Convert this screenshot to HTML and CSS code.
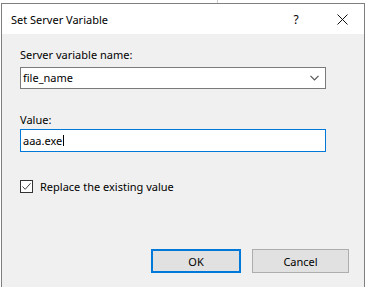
FILE: index.html
```html
<!DOCTYPE html>
<html lang="en">

<head>
  <meta charset="UTF-8" />
  <meta name="viewport" content="width=device-width, initial-scale=1.0" />
  <title>Set Server Variable</title>
  <link rel="stylesheet" href="styles.css">
</head>

<body>
  <div class="backdrop">
    <span class="backdrop-line"></span>
  </div>
  <div class="dialog">
    <div class="titlebar">
      <span class="title">Set Server Variable</span>
      <span class="title-help">?</span>
      <span class="title-close">
        <svg width="11" height="11" viewBox="0 0 11 11">
          <path d="M0.5 0.5 L10.5 10.5 M10.5 0.5 L0.5 10.5" stroke="#111" stroke-width="1" fill="none" />
        </svg>
      </span>
    </div>
    <div class="dialog-body">
      <label class="field-label label-name">Server variable name:</label>
      <div class="combo">
        <span class="field-text">file_name</span>
        <svg class="combo-arrow" width="9" height="6" viewBox="0 0 9 6">
          <path d="M0.5 0.8 L4.5 4.8 L8.5 0.8" stroke="#555" stroke-width="1.2" fill="none" />
        </svg>
      </div>
      <label class="field-label label-value">Value:</label>
      <div class="textbox focused">
        <span class="field-text">aaa.exe</span><span class="caret"></span>
      </div>
      <div class="check-row">
        <span class="checkbox">
          <svg width="11" height="11" viewBox="0 0 11 11">
            <path d="M1.5 5.5 L4.2 8.3 L9.6 2.2" stroke="#444" stroke-width="1" fill="none" />
          </svg>
        </span>
        <span class="check-label">Replace the existing value</span>
      </div>
      <div class="buttons">
        <button class="btn btn-default">OK</button>
        <button class="btn btn-cancel">Cancel</button>
      </div>
    </div>
  </div>
</body>

</html>
```

FILE: styles.css
```css
:root {
  --color-page: #fff;
  --color-face: #f0f0f0;
  --color-frame: #7f7f7f;
  --color-input-border: #7a7a7a;
  --color-accent: #0078d7;
  --color-btn: #e1e1e1;
  --color-btn-border: #adadad;
  --color-text: #000;
  --font-ui: "Noto Sans", "Open Sans", sans-serif;
}

* {
  box-sizing: border-box;
  margin: 0;
  padding: 0;
}

html,
body {
  height: 100%;
  overflow: hidden;
}

body {
  background-color: var(--color-page);
  font-family: var(--font-ui);
  font-size: 11px;
  color: var(--color-text);
  display: flex;
  flex-direction: column;
}

.backdrop {
  height: 3px;
  padding-left: 217px;
}

.backdrop-line {
  display: block;
  width: 1px;
  height: 3px;
  background-color: #ccc;
}

.dialog {
  flex: 1;
  width: 364px;
  margin-left: 1px;
  border: 1px solid var(--color-frame);
  border-bottom: none;
  display: flex;
  flex-direction: column;
}

.titlebar {
  height: 30px;
  background-color: #fff;
  display: flex;
  align-items: center;
  padding-left: 9px;
}

.title {
  flex: 1;
  font-size: 11px;
  line-height: 16px;
  padding-top: 1px;
}

.title-help {
  width: 20px;
  font-size: 12px;
  text-align: center;
  margin-right: 31px;
  padding-top: 1px;
}

.title-close {
  width: 11px;
  height: 11px;
  margin-right: 16px;
  display: flex;
}

.dialog-body {
  flex: 1;
  background-color: var(--color-face);
  padding: 13px 0 0 18px;
  display: flex;
  flex-direction: column;
}

.field-label {
  display: block;
  line-height: 16px;
}

.label-name {
  margin-bottom: 4px;
}

.label-value {
  margin-top: 23px;
  margin-bottom: 1px;
}

.combo,
.textbox {
  width: 306px;
  height: 22px;
  border: 1px solid var(--color-input-border);
  background-color: #fff;
  display: flex;
  align-items: center;
  padding-left: 2px;
}

.textbox {
  height: 23px;
}

.textbox.focused {
  border-color: var(--color-accent);
}

.field-text {
  line-height: 16px;
}

.combo .field-text {
  flex: 1;
}

.combo-arrow {
  margin-right: 6px;
}

.caret {
  display: inline-block;
  width: 1px;
  height: 11px;
  background-color: #000;
  margin-left: 1px;
}

.check-row {
  display: flex;
  align-items: center;
  margin-top: 28px;
  height: 13px;
}

.checkbox {
  width: 13px;
  height: 13px;
  border: 1px solid #333;
  background-color: #fff;
  display: flex;
  align-items: center;
  justify-content: center;
  margin-right: 7px;
}

.check-label {
  line-height: 16px;
}

.buttons {
  display: flex;
  justify-content: flex-end;
  gap: 11px;
  margin-top: 56px;
  padding-right: 15px;
}

.btn {
  height: 24px;
  background-color: var(--color-btn);
  border: 1px solid var(--color-btn-border);
  font-family: inherit;
  font-size: 11px;
  color: var(--color-text);
}

.btn-default {
  width: 90px;
  border: 2px solid var(--color-accent);
}

.btn-cancel {
  width: 97px;
}
```
